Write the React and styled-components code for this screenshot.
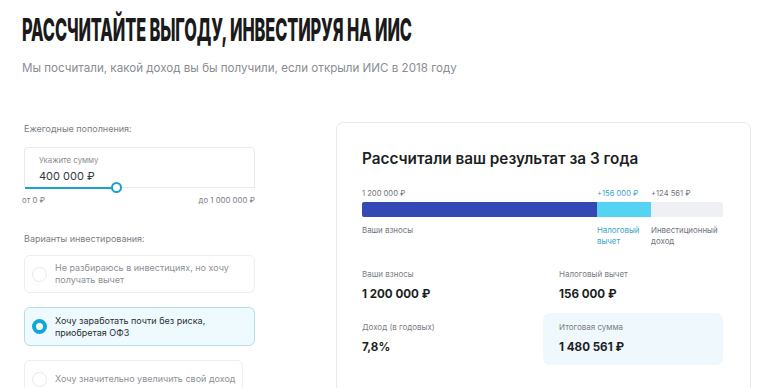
import React from "react";
import styled, { createGlobalStyle } from "styled-components";

const Global = createGlobalStyle`
  html, body { margin: 0; padding: 0; background: #fff; }
  body { font-family: Inter, "Noto Sans", sans-serif; color: #1c1f24; overflow: hidden; }
  * { box-sizing: border-box; }
`;

const Page = styled.div`
  width: 770px;
  height: 388px;
  padding: 14px 0 0 22px;
  overflow: hidden;
`;

const TitleWrap = styled.div`
  height: 32px;
`;

const Title = styled.h1`
  display: inline-block;
  margin: 0;
  font-family: Inter, sans-serif;
  font-weight: 800;
  font-size: 31px;
  line-height: 32px;
  letter-spacing: -0.2px;
  color: #1a1a1a;
  white-space: nowrap;
  transform: scaleX(0.527);
  transform-origin: left center;
`;

const Subtitle = styled.p`
  margin: 13px 0 0;
  font-size: 11.6px;
  line-height: 18px;
  color: #8a8d93;
`;

const Columns = styled.div`
  display: flex;
  align-items: flex-start;
  gap: 81px;
  margin-top: 45px;
  padding-left: 2px;
`;

const Left = styled.div`
  width: 231px;
  display: flex;
  flex-direction: column;
`;

const Label = styled.div`
  margin-top: ${(p) => p.$mt || 0}px;
  font-size: 9px;
  line-height: 14px;
  color: #7b7e84;
`;

const InputBox = styled.div`
  position: relative;
  margin-top: 11px;
  height: 41px;
  border: 1px solid #e8eaed;
  border-bottom: none;
  border-radius: 4px 4px 0 0;
  padding: 6px 0 0 14px;
`;

const InputHint = styled.div`
  font-size: 7.8px;
  line-height: 12px;
  color: #8a8d93;
`;

const InputValue = styled.div`
  margin-top: 2px;
  font-size: 11px;
  line-height: 16px;
  font-weight: 400;
  color: #34373c;
`;

const Track = styled.div`
  position: absolute;
  left: 0;
  right: 0;
  bottom: 0;
  height: 1px;
  background: #e8eaed;
`;

const Fill = styled.div`
  height: 2px;
  margin-top: -0.5px;
  background: #1aa3c4;
`;

const Knob = styled.div`
  position: absolute;
  top: -5px;
  width: 11px;
  height: 11px;
  margin-left: -5.5px;
  border-radius: 50%;
  border: 2.5px solid #1aa3c4;
  background: #fff;
`;

const Range = styled.div`
  display: flex;
  justify-content: space-between;
  margin-top: 6px;
  margin-left: -2px;
  font-size: 7.8px;
  line-height: 12px;
  color: #7b7e84;
`;

const Options = styled.div`
  margin-top: 9px;
  display: flex;
  flex-direction: column;
  align-items: flex-start;
  gap: 14px;
`;

const Option = styled.div`
  display: flex;
  align-items: center;
  gap: 8px;
  width: ${(p) => (p.$fit ? "auto" : "100%")};
  height: ${(p) => (p.$active ? 39 : 38)}px;
  padding: 0 ${(p) => (p.$fit ? "6px" : "12px")} 0 7px;
  border-radius: 6px;
  border: 1px solid ${(p) => (p.$active ? "#b6dde6" : "#eceef0")};
  background: ${(p) => (p.$active ? "#eefafd" : "#fff")};
  font-size: 9px;
  line-height: 12px;
  color: ${(p) => (p.$active ? "#2b2e33" : "#8d9096")};
  white-space: nowrap;
`;

const Radio = styled.span`
  flex: none;
  width: 15px;
  height: 15px;
  border-radius: 50%;
  border: ${(p) => (p.$active ? "4px solid #12a8d6" : "1px solid #e6e8eb")};
  background: #fff;
`;

const Card = styled.div`
  width: 415px;
  height: 300px;
  border: 1px solid #e8eaed;
  border-radius: 7px;
  padding: 26px 27px 0 25px;
`;

const CardTitle = styled.h2`
  margin: 0;
  font-size: 15.3px;
  line-height: 20px;
  font-weight: 600;
  color: #1c1f24;
`;

const Cols = "235px 54px 1fr";

const BarLabels = styled.div`
  margin-top: 19px;
  display: grid;
  grid-template-columns: ${Cols};
  font-size: 7.6px;
  line-height: 11px;
`;

const BarLabel = styled.div`
  color: ${(p) => p.$color || "#6f747c"};
`;

const Bar = styled.div`
  margin-top: 3px;
  height: 15px;
  display: grid;
  grid-template-columns: ${Cols};
  border-radius: 2px;
  overflow: hidden;
`;

const Seg = styled.div`
  background: ${(p) => p.$color};
`;

const Legend = styled.div`
  margin-top: 8px;
  display: grid;
  grid-template-columns: ${Cols};
  font-size: 7.9px;
  line-height: 11px;
`;

const Stats = styled.div`
  margin-top: 13px;
  display: grid;
  grid-template-columns: 181px 180px;
  grid-template-rows: 51px 52px;
  row-gap: 2px;
`;

const Stat = styled.div`
  padding: 9px 0 0 ${(p) => (p.$inset ? 16 : 0)}px;
  background: ${(p) => (p.$hl ? "#eef8fd" : "transparent")};
  border-radius: 7px;
`;

const StatLabel = styled.div`
  font-size: 8px;
  line-height: 11px;
  color: #7b7e84;
`;

const StatValue = styled.div`
  margin-top: 6px;
  font-size: 11.6px;
  line-height: 16px;
  font-weight: 700;
  color: #1c1f24;
`;

export default function App() {
  return (
    <Page>
      <Global />
      <TitleWrap>
        <Title>РАССЧИТАЙТЕ ВЫГОДУ, ИНВЕСТИРУЯ НА ИИС</Title>
      </TitleWrap>
      <Subtitle>Мы посчитали, какой доход вы бы получили, если открыли ИИС в 2018 году</Subtitle>
      <Columns>
        <Left>
          <Label>Ежегодные пополнения:</Label>
          <InputBox>
            <InputHint>Укажите сумму</InputHint>
            <InputValue>400 000 ₽</InputValue>
            <Track>
              <Fill style={{ width: "40%" }} />
              <Knob style={{ left: "40%" }} />
            </Track>
          </InputBox>
          <Range>
            <span>от 0 ₽</span>
            <span>до 1 000 000 ₽</span>
          </Range>
          <Label $mt={26}>Варианты инвестирования:</Label>
          <Options>
            <Option>
              <Radio />
              <span>Не разбираюсь в инвестициях, но хочу<br />получать вычет</span>
            </Option>
            <Option $active>
              <Radio $active />
              <span>Хочу заработать почти без риска,<br />приобретая ОФЗ</span>
            </Option>
            <Option $fit>
              <Radio />
              <span>Хочу значительно увеличить свой доход</span>
            </Option>
          </Options>
        </Left>
        <Card>
          <CardTitle>Рассчитали ваш результат за 3 года</CardTitle>
          <BarLabels>
            <BarLabel>1 200 000 ₽</BarLabel>
            <BarLabel $color="#3aa6c8">+156 000 ₽</BarLabel>
            <BarLabel>+124 561 ₽</BarLabel>
          </BarLabels>
          <Bar>
            <Seg $color="#3449b4" />
            <Seg $color="#55d3f3" />
            <Seg $color="#eef0f3" />
          </Bar>
          <Legend>
            <BarLabel>Ваши взносы</BarLabel>
            <BarLabel $color="#3aa6c8">Налоговый<br />вычет</BarLabel>
            <BarLabel>Инвестиционный<br />доход</BarLabel>
          </Legend>
          <Stats>
            <Stat>
              <StatLabel>Ваши взносы</StatLabel>
              <StatValue>1 200 000 ₽</StatValue>
            </Stat>
            <Stat $inset>
              <StatLabel>Налоговый вычет</StatLabel>
              <StatValue>156 000 ₽</StatValue>
            </Stat>
            <Stat>
              <StatLabel>Доход (в годовых)</StatLabel>
              <StatValue>7,8%</StatValue>
            </Stat>
            <Stat $hl $inset>
              <StatLabel>Итоговая сумма</StatLabel>
              <StatValue>1 480 561 ₽</StatValue>
            </Stat>
          </Stats>
        </Card>
      </Columns>
    </Page>
  );
}
